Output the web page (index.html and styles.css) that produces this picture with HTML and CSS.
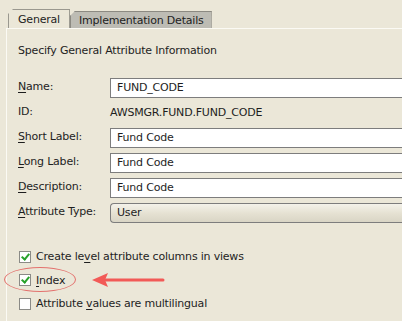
FILE: index.html
```html
<!DOCTYPE html>
<html lang="en">
<head>
    <meta charset="UTF-8">
    <title>Attribute Properties</title>
    <link rel="stylesheet" href="styles.css">
</head>
<body>

<div class="tabs">
    <div class="tab active">General</div>
    <div class="tab">Implementation Details</div>
</div>

<div class="panel">
    <p class="heading">Specify General Attribute Information</p>

    <div class="form">
        <div class="label"><u>N</u>ame:</div>
        <div class="field input">FUND_CODE</div>

        <div class="label">ID:</div>
        <div class="field plain">AWSMGR.FUND.FUND_CODE</div>

        <div class="label"><u>S</u>hort Label:</div>
        <div class="field input">Fund Code</div>

        <div class="label"><u>L</u>ong Label:</div>
        <div class="field input">Fund Code</div>

        <div class="label"><u>D</u>escription:</div>
        <div class="field input">Fund Code</div>

        <div class="label"><u>A</u>ttribute Type:</div>
        <div class="field select">User</div>
    </div>

    <div class="checks">
        <div class="check"><span class="box on"></span><span>Create le<u>v</u>el attribute columns in views</span></div>
        <div class="check"><span class="box on"></span><span><u>I</u>ndex</span></div>
        <div class="check"><span class="box"></span><span>Attribute <u>v</u>alues are multilingual</span></div>
    </div>

    <!-- annotation overlay -->
    <div class="ring"></div>
    <svg class="arrow" width="80" height="16" viewBox="0 0 80 16">
        <line x1="12" y1="8" x2="71" y2="8" stroke="#f25a57" stroke-width="3" stroke-linecap="round"/>
        <polygon points="0,8 16,1 13,8 16,15" fill="#f25a57"/>
    </svg>
</div>

</body>
</html>
```

FILE: styles.css
```css
body {
    margin: 0;
    width: 402px;
    height: 321px;
    overflow: hidden;
    background-color: #ebe7d8;
    font-family: "DejaVu Sans", "Open Sans", sans-serif;
    font-size: 11px;
    letter-spacing: -0.2px;
    color: #1e1e1e;
}

/* Tab strip */
.tabs {
    display: flex;
    align-items: flex-end;
    height: 29px;
    padding-left: 8px;
    box-sizing: border-box;
}
.tab {
    height: 17px;
    line-height: 17px;
    padding: 0 7px 0 8px;
    border: 1px solid #8c8a82;
    border-bottom: none;
    clip-path: polygon(5px 0, 100% 0, 100% 100%, 0 100%, 0 5px);
    background-color: #bdbcb4;
}
.tab.active {
    height: 19px;
    line-height: 19px;
    padding: 0 9px 0 9px;
    background-color: #ebe7d8;
    border-color: #9a988f;
}

/* Main panel */
.panel {
    position: relative;
    height: 293px;
    margin: -1px 0 0 6px;
    border-left: 1px solid #fbfaf4;
    border-top: 1px solid #fbfaf4;
    padding: 14px 0 0 11px;
    box-sizing: border-box;
}
.heading {
    margin: 0 0 19px;
    line-height: 16px;
}

.form {
    display: grid;
    grid-template-columns: 92px 1fr;
    grid-auto-rows: 20px;
    row-gap: 5px;
}
.label {
    line-height: 18px;
}
.label u, .check u {
    text-decoration-thickness: 1px;
    text-underline-offset: 2px;
}
.field {
    box-sizing: border-box;
    line-height: 18px;
    padding-left: 6px;
}
.field.input {
    background-color: #fff;
    border: 1px solid #7d7d7d;
    border-right: none;
}
.field.plain {
    padding-left: 0;
    line-height: 20px;
}
.field.select {
    border: 1px solid #7d7d7d;
    border-right: none;
    border-radius: 4px 0 0 4px;
    background: linear-gradient(#f4f2ea, #e6e2d3 50%, #d9d5c5);
}

/* Checkboxes */
.checks {
    margin-top: 22px;
    display: flex;
    flex-direction: column;
}
.check {
    display: flex;
    align-items: center;
    height: 23.5px;
    padding-left: 1px;
}
.box {
    width: 12px;
    height: 12px;
    box-sizing: border-box;
    border: 1px solid #8a8a86;
    background-color: #fff;
    margin-right: 5px;
    position: relative;
}
.box.on::after {
    content: "";
    position: absolute;
    left: 3px;
    top: 0;
    width: 3px;
    height: 6px;
    border: solid #28a22a;
    border-width: 0 2.5px 2.5px 0;
    transform: rotate(40deg);
}

/* Annotation */
.ring {
    position: absolute;
    left: -3px;
    top: 238px;
    width: 72px;
    height: 25px;
    box-sizing: border-box;
    border: 1px solid #e3716d;
    border-radius: 50%;
}
.arrow {
    position: absolute;
    left: 85px;
    top: 243px;
}
```
